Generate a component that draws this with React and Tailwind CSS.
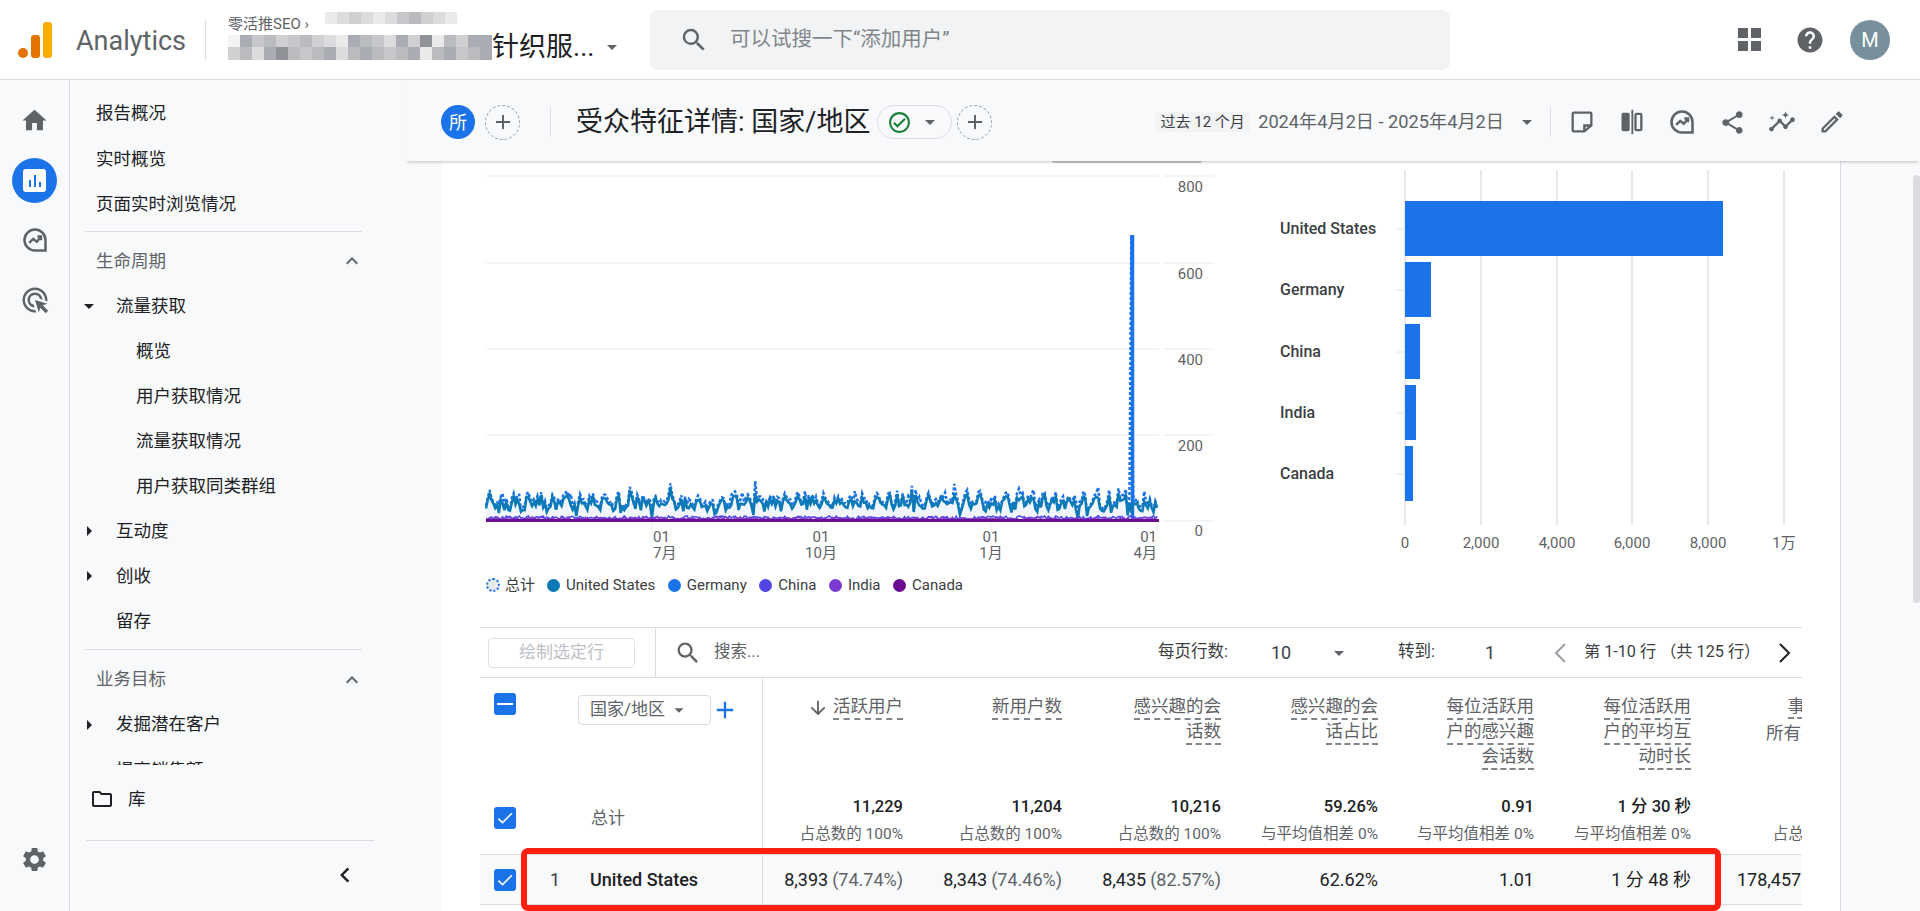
import React from "react";
import {
  MdHome, MdSettings, MdSearch, MdArrowDropDown, MdExpandLess, MdArrowRight, MdOutlineFolder,
  MdChevronLeft, MdShare, MdOutlineEdit, MdOutlineCheckCircle, MdAdd, MdHelp,
  MdArrowDownward, MdInsights, MdCheck, MdAdsClick,
} from "react-icons/md";

const tones = ["bg-[#c6c7ca]", "bg-[#a9adb3]", "bg-[#dcdcdf]", "bg-[#b9bbbf]", "bg-[#8f9398]", "bg-[#eaeaeb]", "bg-[#d0d0d2]", "bg-[#f3f3f4]"];
const mosaicTop = [5, 2, 6, 2, 5, 2, 0, 3, 6, 2, 5];
const mosaicA = [7, 1, 0, 3, 6, 0, 3, 6, 2, 5, 1, 3, 0, 2, 1, 6, 4, 5, 3, 6, 1, 1];
const mosaicB = [6, 3, 2, 1, 4, 3, 0, 3, 1, 2, 3, 1, 3, 0, 3, 1, 5, 3, 1, 0, 3, 1];

// fake daily data, seeded so it stays the same on each render
let seed = 71;
const rnd = () => {
  seed = (seed * 16807) % 2147483647;
  return seed / 2147483647;
};
const N = 365;
const toX = (i) => 45 + (i * 673) / N;
const toY = (v) => 360 - v * 0.43;
const us = [];
const total = [];
for (let i = 0; i < N; i++) {
  let v = 29 + 9 * Math.sin((i * Math.PI * 2) / 7) + rnd() * 24 - (rnd() > 0.9 ? 18 : 0);
  if (rnd() > 0.96) v += 20;
  if (i > 120 && i < 135) v -= 8;
  us.push(Math.max(6, v));
  total.push(Math.max(8, v * 1.08 + rnd() * 8 + (rnd() > 0.93 ? 16 : 0)));
}
us[350] = 20;
us[351] = 40;
total[349] = 60;
total[350] = 665;
total[351] = 60;
const line = (vals) => vals.map((v, i) => `${i ? "L" : "M"}${toX(i).toFixed(1)} ${toY(v).toFixed(1)}`).join(" ");
const lowLine = (base, amp) => line(Array.from({ length: N }, () => base + rnd() * amp));

const gridY = [15, 102, 188, 274, 360];
const yLabels = [
  ["800", 31], ["600", 118], ["400", 204], ["200", 290], ["0", 375],
];

function LineChart() {
  return (
    <svg width="800" height="410" className="block">
      {gridY.map((y) => (
        <g key={y}>
          <line x1="45" x2="718" y1={y} y2={y} stroke="#e8eaed" />
          <line x1="723" x2="773" y1={y} y2={y} stroke="#e8eaed" />
        </g>
      ))}
      {[211, 381, 550, 716].map((x) => (
        <line key={x} x1={x} x2={x} y1="360" y2="372" stroke="#e8eaed" />
      ))}
      <path d={`${line(total)} L718 360 L45 360 Z`} fill="#e8f0fe" opacity="0.6" />
      <path d={line(total)} fill="none" stroke="#1a73e8" strokeWidth="2.5" strokeDasharray="3 2" />
      <line x1="691.5" x2="691.5" y1="74" y2="360" stroke="#1a73e8" strokeWidth="3.5" />
      <path d={line(us)} fill="none" stroke="#0b79b5" strokeWidth="2.5" />
      <path d={lowLine(3, 9)} fill="none" stroke="#4f46e5" strokeWidth="1.5" />
      <path d={lowLine(2, 7)} fill="none" stroke="#7b3bd0" strokeWidth="1.5" />
      <line x1="45" x2="718" y1="359.5" y2="359.5" stroke="#6a0d91" strokeWidth="3" />
      {yLabels.map(([t, y]) => (
        <text key={t} x="762" y={y} textAnchor="end" fontSize="15" fill="#5f6368">{t}</text>
      ))}
      <g fontSize="15" fill="#5f6368">
        <text x="212" y="381">01</text>
        <text x="212" y="397">7月</text>
        <text x="380" y="381" textAnchor="middle">01</text>
        <text x="380" y="397" textAnchor="middle">10月</text>
        <text x="550" y="381" textAnchor="middle">01</text>
        <text x="550" y="397" textAnchor="middle">1月</text>
        <text x="716" y="381" textAnchor="end">01</text>
        <text x="716" y="397" textAnchor="end">4月</text>
      </g>
    </svg>
  );
}

const bars = [
  ["United States", 40, 482],
  ["Germany", 101, 190],
  ["China", 163, 179],
  ["India", 224, 175],
  ["Canada", 285, 172],
];
const barTicks = [
  ["0", 164], ["2,000", 240], ["4,000", 316], ["6,000", 391], ["8,000", 467], ["1万", 543],
];

function BarChart() {
  return (
    <svg width="600" height="410" className="block">
      {barTicks.map(([t, x]) => (
        <g key={t}>
          <line x1={x} x2={x} y1="9" y2="364" stroke="#e0e2e5" strokeWidth="1.5" />
          <text x={x} y="387" textAnchor="middle" fontSize="15" fill="#5f6368">{t}</text>
        </g>
      ))}
      {bars.map(([name, y, end]) => (
        <g key={name}>
          <line x1="156" x2="164" y1={y + 28} y2={y + 28} stroke="#e0e2e5" />
          <rect x="164" y={y} width={end - 164} height="55" fill="#1a73e8" />
          <text x="39" y={y + 33} fontSize="16" fontWeight="500" fill="#3c4043">{name}</text>
        </g>
      ))}
    </svg>
  );
}

const legend = [
  ["United States", "bg-[#0b79b5]"],
  ["Germany", "bg-[#1a73e8]"],
  ["China", "bg-[#4f46e5]"],
  ["India", "bg-[#7b3bd0]"],
  ["Canada", "bg-[#6a0d91]"],
];

function ExploreIcon() {
  return (
    <svg width="28" height="28" viewBox="0 0 24 24" fill="none" stroke="#5f6368" strokeWidth="2.2">
      <path d="M12 3a9 9 0 0 1 9 9v9h-9a9 9 0 0 1 0-18z" />
      <path d="M7 14.5l3.5-3.5 3 2.5L17 9.5M14 9h3.2v3.2" strokeWidth="2" />
    </svg>
  );
}

function Chevron({ back, color }) {
  return (
    <svg width="14" height="20" viewBox="0 0 14 20" fill="none" stroke={color} strokeWidth="2" className="shrink-0">
      <path d={back ? "M12 1L3 10l9 9" : "M2 1l9 9-9 9"} />
    </svg>
  );
}

function NavItem({ label, indent = 26, caret }) {
  return (
    <div className="relative flex h-[45.1px] items-center text-[17.5px] text-[#202124]" style={{ paddingLeft: indent }}>
      {caret === "open" && <MdArrowDropDown size={24} className="absolute left-[7px] text-[#202124]" />}
      {caret === "closed" && <MdArrowRight size={24} className="absolute left-[7px] text-[#202124]" />}
      {label}
    </div>
  );
}

function NavSection({ label, className }) {
  return (
    <div className={`flex h-[45px] items-center justify-between pl-[26px] pr-[77px] text-[17.5px] text-[#5f6368] ${className}`}>
      {label}
      <MdExpandLess size={24} className="text-[#5f6368]" />
    </div>
  );
}

function Box({ checked }) {
  return (
    <div className="flex h-[22px] w-[22px] shrink-0 items-center justify-center rounded-[3px] bg-[#1a73e8]">
      {checked ? <MdCheck size={20} className="text-white" /> : <div className="h-[2px] w-[16px] bg-white" />}
    </div>
  );
}

function HeadLines({ lines }) {
  return (
    <div className="flex flex-col items-end pt-[17px] text-[17.5px] text-[#5f6368]">
      {lines.map((t) => (
        <span key={t} className="h-[25px] w-fit whitespace-nowrap border-b-2 border-dashed border-[#80868b] leading-[23px]">{t}</span>
      ))}
    </div>
  );
}

const colCells = ["w-[148px]", "w-[159px]", "w-[159px]", "w-[157px]", "w-[156px]", "w-[157px]"];
const heads = [
  ["活跃用户"],
  ["新用户数"],
  ["感兴趣的会", "话数"],
  ["感兴趣的会", "话占比"],
  ["每位活跃用", "户的感兴趣", "会话数"],
  ["每位活跃用", "户的平均互", "动时长"],
];
const totals = [
  ["11,229", "占总数的 100%"],
  ["11,204", "占总数的 100%"],
  ["10,216", "占总数的 100%"],
  ["59.26%", "与平均值相差 0%"],
  ["0.91", "与平均值相差 0%"],
  ["1 分 30 秒", "与平均值相差 0%"],
];
const usRow = [
  ["8,393", "(74.74%)"],
  ["8,343", "(74.46%)"],
  ["8,435", "(82.57%)"],
  ["62.62%"],
  ["1.01"],
  ["1 分 48 秒"],
];

export default function App() {
  return (
    <div className="relative flex h-screen w-screen flex-col overflow-hidden bg-[#f8f9fb] font-[Roboto,'Noto_Sans_CJK_SC',sans-serif]">
      {/* top bar */}
      <header className="flex h-[80px] shrink-0 items-center border-b border-[#dadce0] bg-white">
        <svg width="34" height="36" viewBox="0 0 34 36" className="ml-[18px]">
          <circle cx="5" cy="31" r="5" fill="#e37400" />
          <rect x="13" y="13" width="9" height="23" rx="3" fill="#e37400" />
          <rect x="25" y="0" width="9" height="36" rx="3" fill="#f9ab00" />
        </svg>
        <span className="ml-[24px] mt-[3px] text-[27px] text-[#5f6368]">Analytics</span>
        <div className="ml-[19px] h-[40px] w-px bg-[#dadce0]" />
        <div className="ml-[22px] flex w-[400px] flex-col pb-[8px]">
          <div className="flex h-[23px] items-start">
            <span className="mt-[4px] w-[97px] whitespace-nowrap text-[15px] leading-[16px] text-[#5f6368]">零活推SEO ›</span>
            <div className="grid h-[12px] grid-cols-[repeat(11,12px)]">
              {mosaicTop.map((t, i) => (
                <div key={i} className={`h-[12px] ${tones[t]}`} />
              ))}
            </div>
          </div>
          <div className="flex h-[25px] items-center">
            <div className="grid w-[264px] shrink-0 grid-cols-[repeat(22,12px)]">
              {[...mosaicA, ...mosaicB].map((t, i) => (
                <div key={i} className={`h-[12.5px] ${tones[t]}`} />
              ))}
            </div>
            <span className="whitespace-nowrap text-[27px] text-[#202124]">针织服...</span>
            <MdArrowDropDown size={24} className="ml-[6px] text-[#5f6368]" />
          </div>
        </div>
        <div className="ml-[22px] flex h-[60px] w-[800px] items-center rounded-lg bg-[#f1f3f4] pl-[29px]">
          <MdSearch size={30} className="text-[#5f6368]" />
          <span className="ml-[21px] text-[20.5px] text-[#80868b]">可以试搜一下“添加用户”</span>
        </div>
        <div className="ml-auto flex items-center pr-[30px]">
          <div className="grid grid-cols-2 gap-[3px]">
            <div className="h-[10px] w-[10px] bg-[#5f6368]" />
            <div className="h-[10px] w-[10px] bg-[#5f6368]" />
            <div className="h-[10px] w-[10px] bg-[#5f6368]" />
            <div className="h-[10px] w-[10px] bg-[#5f6368]" />
          </div>
          <MdHelp size={30} className="ml-[34px] text-[#5f6368]" />
          <div className="ml-[25px] flex h-[40px] w-[40px] items-center justify-center rounded-full bg-[#78909c] text-[20px] text-white">M</div>
        </div>
      </header>

      <div className="flex min-h-0 flex-1">
        {/* icon rail */}
        <aside className="flex w-[70px] shrink-0 flex-col items-center border-r border-[#dadce0] pt-[10px]">
          <div className="flex h-[60px] items-center"><MdHome size={29} className="text-[#5f6368]" /></div>
          <div className="flex h-[60px] items-center">
            <div className="flex h-[45px] w-[45px] items-center justify-center rounded-full bg-[#1a73e8]">
              <div className="flex h-[23px] w-[23px] items-end justify-center gap-[3px] rounded-[3px] bg-white pb-[5px]">
                <div className="h-[7px] w-[2px] bg-[#1a73e8]" />
                <div className="h-[12px] w-[2px] bg-[#1a73e8]" />
                <div className="h-[5px] w-[2px] bg-[#1a73e8]" />
              </div>
            </div>
          </div>
          <div className="flex h-[60px] items-center"><ExploreIcon /></div>
          <div className="flex h-[60px] items-center"><MdAdsClick size={30} className="text-[#5f6368]" /></div>
          <div className="mb-[28px] mt-auto flex h-[48px] items-center"><MdSettings size={29} className="text-[#5f6368]" /></div>
        </aside>

        {/* report nav */}
        <nav className="flex w-[371px] shrink-0 flex-col">
          <div className="h-[685px] shrink-0 overflow-hidden pt-[11px]">
            <NavItem label="报告概况" />
            <NavItem label="实时概览" />
            <NavItem label="页面实时浏览情况" />
            <div className="ml-[15px] mt-[5px] h-px w-[277px] bg-[#dadce0]" />
            <NavSection label="生命周期" className="mt-[6px]" />
            <NavItem label="流量获取" indent={46} caret="open" />
            <NavItem label="概览" indent={66} />
            <NavItem label="用户获取情况" indent={66} />
            <NavItem label="流量获取情况" indent={66} />
            <NavItem label="用户获取同类群组" indent={66} />
            <NavItem label="互动度" indent={46} caret="closed" />
            <NavItem label="创收" indent={46} caret="closed" />
            <NavItem label="留存" indent={46} />
            <div className="ml-[15px] mt-[5px] h-px w-[277px] bg-[#dadce0]" />
            <NavSection label="业务目标" className="mt-[7px]" />
            <NavItem label="发掘潜在客户" indent={46} caret="closed" />
            <NavItem label="提高销售额" indent={46} caret="closed" />
          </div>
          <div className="flex h-[75px] shrink-0 items-center pb-[7px] pl-[20px] text-[17.5px] text-[#202124]">
            <MdOutlineFolder size={24} className="text-[#202124]" />
            <span className="ml-[14px]">库</span>
          </div>
          <div className="ml-[16px] h-px w-[288px] bg-[#dadce0]" />
          <div className="flex h-[68px] items-center pl-[260px]">
            <MdChevronLeft size={30} className="text-[#202124]" />
          </div>
        </nav>

        <main className="flex min-w-0 flex-1 flex-col">
          {/* report title bar */}
          <div className="relative z-10 -ml-[36px] flex h-[81px] shrink-0 items-center pl-[36px] pr-[63px] pt-[3px] shadow-[0_3px_3px_-2px_rgba(60,64,67,0.3)]">
            <div className="flex h-[34px] w-[34px] items-center justify-center rounded-full bg-[#1a73e8] text-[18px] text-white">所</div>
            <div className="ml-[10px] flex h-[35px] w-[35px] items-center justify-center rounded-full border border-dashed border-[#9aa0a6]">
              <MdAdd size={24} className="text-[#5f6368]" />
            </div>
            <div className="ml-[30px] h-[30px] w-px bg-[#dadce0]" />
            <h1 className="ml-[25px] whitespace-nowrap text-[27px] font-normal text-[#202124]">受众特征详情: 国家/地区</h1>
            <div className="ml-[7px] flex h-[34px] w-[75px] items-center rounded-full border border-[#dadce0] pl-[9px]">
              <MdOutlineCheckCircle size={25} className="text-[#188038]" />
              <MdArrowDropDown size={24} className="ml-[6px] text-[#5f6368]" />
            </div>
            <div className="ml-[5px] flex h-[35px] w-[35px] items-center justify-center rounded-full border border-dashed border-[#9aa0a6]">
              <MdAdd size={24} className="text-[#5f6368]" />
            </div>
            <div className="ml-auto flex items-center">
              <span className="flex h-[20px] w-[95px] items-center justify-center whitespace-nowrap bg-[#f1f3f4] text-[15px] text-[#3c4043]">过去 12 个月</span>
              <span className="ml-[8px] whitespace-nowrap text-[18.2px] text-[#5f6368]">2024年4月2日 - 2025年4月2日</span>
              <MdArrowDropDown size={24} className="ml-[11px] text-[#5f6368]" />
              <div className="ml-[11px] h-[30px] w-px bg-[#dadce0]" />
              <div className="ml-[6px] flex h-[40px] w-[50px] items-center justify-center">
                <svg width="28" height="28" viewBox="0 0 24 24" fill="none" stroke="#5f6368" strokeWidth="2">
                  <path d="M5 4h14a1 1 0 0 1 1 1v10l-6 5H5a1 1 0 0 1-1-1V5a1 1 0 0 1 1-1z" />
                  <path d="M14 20v-5h6" />
                </svg>
              </div>
              <div className="flex h-[40px] w-[50px] items-center justify-center">
                <svg width="28" height="28" viewBox="0 0 24 24" fill="#5f6368">
                  <rect x="3" y="4" width="7" height="16" rx="1.5" />
                  <rect x="11.5" y="1.5" width="1.6" height="21" />
                  <rect x="15" y="5" width="5" height="14" rx="1" fill="none" stroke="#5f6368" strokeWidth="2" />
                </svg>
              </div>
              <div className="flex h-[40px] w-[50px] items-center justify-center"><ExploreIcon /></div>
              <div className="flex h-[40px] w-[50px] items-center justify-center"><MdShare size={27} className="text-[#5f6368]" /></div>
              <div className="flex h-[40px] w-[50px] items-center justify-center"><MdInsights size={28} className="text-[#5f6368]" /></div>
              <div className="flex h-[40px] w-[50px] items-center justify-center"><MdOutlineEdit size={28} className="text-[#5f6368]" /></div>
            </div>
          </div>

          <div className="flex min-h-0 flex-1">
            {/* report card */}
            <section className="relative w-[1400px] shrink-0 border-r border-[#dadce0] bg-white">
              <div className="absolute left-[611px] top-0 h-[2px] w-[150px] rounded-b bg-[#c4c7c5]" />
              <div className="flex h-[466px]">
                <div className="w-[800px] shrink-0">
                  <LineChart />
                  <div className="ml-[45px] flex h-[28px] items-center text-[15px] text-[#3c4043]">
                    <span className="h-[14px] w-[14px] rounded-full border-2 border-dotted border-[#1a73e8] bg-[#e8eaed]" />
                    <span className="ml-[5px] mr-[12px]">总计</span>
                    {legend.map(([t, c]) => (
                      <React.Fragment key={t}>
                        <span className={`h-[13px] w-[13px] rounded-full ${c}`} />
                        <span className="ml-[6px] mr-[12.5px]">{t}</span>
                      </React.Fragment>
                    ))}
                  </div>
                </div>
                <BarChart />
              </div>

              {/* data table */}
              <div className="ml-[39px] w-[1322px] overflow-hidden border-t border-[#dadce0]">
                <div className="flex h-[50px] items-center border-b border-[#dadce0] text-[16.5px] text-[#3c4043]">
                  <div className="flex h-full w-[176px] shrink-0 items-center border-r border-[#dadce0] pl-[8px]">
                    <div className="flex h-[30px] w-[147px] items-center justify-center rounded-[4px] border border-[#e0e2e5] text-[17px] text-[#bdc1c6]">绘制选定行</div>
                  </div>
                  <MdSearch size={28} className="ml-[18px] text-[#5f6368]" />
                  <span className="ml-[12px] text-[#5f6368]">搜索...</span>
                  <div className="ml-auto flex w-[644px] items-center whitespace-nowrap">
                    <span className="w-[113px]">每页行数:</span>
                    <span className="w-[56px] text-[18px]">10</span>
                    <MdArrowDropDown size={24} className="text-[#5f6368]" />
                    <span className="ml-[47px] w-[87px]">转到:</span>
                    <span className="w-[68px] text-[18px]">1</span>
                    <Chevron back color="#9aa0a6" />
                    <span className="ml-[17px] w-[194px] text-[16.2px]">第 1-10 行 （共 125 行）</span>
                    <Chevron color="#202124" />
                  </div>
                </div>

                <div className="flex h-[112px] w-[1600px]">
                  <div className="flex w-[283px] shrink-0 items-start border-r border-[#dadce0] pl-[14px] pt-[15px]">
                    <Box />
                    <div className="ml-[62px] mt-[2px] flex h-[30px] w-[133px] items-center rounded-[4px] border border-[#dadce0] pl-[11px] text-[17px] text-[#5f6368]">
                      国家/地区
                      <MdArrowDropDown size={22} className="ml-[3px]" />
                    </div>
                    <MdAdd size={28} className="mt-[3px] text-[#1a73e8]" />
                  </div>
                  {heads.map((lines, i) => (
                    <div key={i} className={`${colCells[i]} relative shrink-0 pr-[8px]`}>
                      {i === 0 && <MdArrowDownward size={22} className="absolute left-[44px] top-[19px] text-[#5f6368]" />}
                      <HeadLines lines={lines} />
                    </div>
                  ))}
                  <div className="w-[185px] shrink-0 pr-[8px] pt-[17px] text-right text-[17.5px] text-[#5f6368]">
                    <div className="mr-[36px] h-[25px] leading-[23px]"><span className="border-b-2 border-dashed border-[#80868b] pb-px">事件数</span></div>
                    <div className="mr-[40px] h-[25px] text-[#5f6368]">所有事件</div>
                  </div>
                </div>

                <div className="flex h-[64px] w-[1600px]">
                  <div className="flex w-[283px] shrink-0 items-start border-r border-[#dadce0] pl-[14px] pt-[17px]">
                    <Box checked />
                    <span className="ml-[75px] text-[17px] leading-[22px] text-[#5f6368]">总计</span>
                  </div>
                  {totals.map(([v, s], i) => (
                    <div key={i} className={`${colCells[i]} shrink-0 pr-[8px] pt-[7px] text-right`}>
                      <div className="h-[20px] text-[16.5px] font-medium leading-[20px] text-[#202124]">{v}</div>
                      <div className="mt-[7px] whitespace-nowrap text-[15.5px] leading-[20px] text-[#5f6368]">{s}</div>
                    </div>
                  ))}
                  <div className="w-[185px] shrink-0 pr-[8px] pt-[7px] text-right">
                    <div className="h-[20px] text-[16.5px] font-medium leading-[20px] text-[#202124]">199,817</div>
                    <div className="mt-[7px] whitespace-nowrap text-[15.5px] leading-[20px] text-[#5f6368]">占总数的 100%</div>
                  </div>
                </div>

                <div className="flex h-[51px] w-[1600px] border-y border-[#dadce0] bg-[#f8f9fa]">
                  <div className="flex w-[283px] shrink-0 items-center border-r border-[#dadce0] pl-[14px]">
                    <Box checked />
                    <span className="ml-[34px] w-[40px] text-[18px] text-[#3c4043]">1</span>
                    <span className="text-[18px] font-medium text-[#202124]">United States</span>
                  </div>
                  {usRow.map(([v, p], i) => (
                    <div key={i} className={`${colCells[i]} flex shrink-0 items-center justify-end whitespace-nowrap pr-[8px] text-[18px] text-[#202124]`}>
                      {v}
                      {p && <span className="ml-[4px] text-[#5f6368]">{p}</span>}
                    </div>
                  ))}
                  <div className="flex w-[185px] shrink-0 items-center justify-end whitespace-nowrap pr-[8px] text-[18px] text-[#202124]">
                    178,457<span className="ml-[4px] text-[#5f6368]">(89.31%)</span>
                  </div>
                </div>
              </div>
            </section>

            {/* page scrollbar */}
            <div className="flex flex-1 justify-end pt-[14px]">
              <div className="h-[428px] w-[7px] rounded-full bg-[#dadce0]" />
            </div>
          </div>
        </main>
      </div>

      {/* red highlight drawn over the screenshot */}
      <div className="pointer-events-none absolute left-[521px] top-[848px] z-20 h-[63px] w-[1200px] rounded-[7px] border-[6px] border-[#ff1f10]" />
    </div>
  );
}
